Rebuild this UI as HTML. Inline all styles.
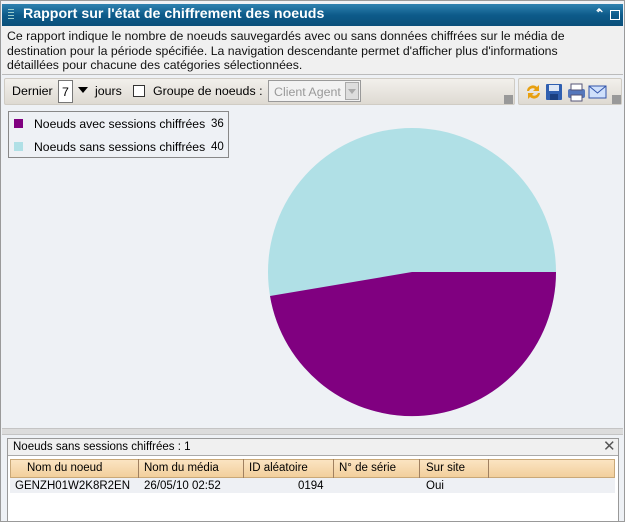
<!DOCTYPE html>
<html><head><meta charset="utf-8"><style>
*{box-sizing:border-box;margin:0;padding:0}
body{width:625px;height:522px;background:#c8c8c8;font-family:"Liberation Sans","DejaVu Sans",sans-serif;font-size:11px;color:#000;position:relative;overflow:hidden}
.abs{position:absolute;white-space:nowrap}
</style></head><body>
<div class="abs" style="left:0;top:0;width:625px;height:522px;background:#eef1f5;border:1px solid #9a9a9a"></div>
<div class="abs" style="left:2px;top:4px;width:621px;height:22px;background:linear-gradient(#2f82b0,#0d5b8a 50%,#0a4f7a);"></div>
<div class="abs" style="left:8px;top:9px;width:6px;height:12px;background:repeating-linear-gradient(#9cc 0 1px,transparent 1px 3px)"></div>
<div class="abs" style="left:23px;top:6px;color:#fff;font-weight:bold;font-size:14.2px">Rapport sur l'état de chiffrement des noeuds</div>
<div class="abs" style="left:594px;top:6px;color:#fff;font-size:12px;font-weight:bold">&#8963;</div>
<div class="abs" style="left:595px;top:11px;color:#fff;font-size:12px;font-weight:bold;line-height:6px">&#8963;</div>
<div class="abs" style="left:610px;top:10px;width:10px;height:10px;border:1.5px solid #fff"></div>
<div class="abs" style="left:2px;top:26px;width:621px;height:49px;background:#f0f0f0;border-bottom:1px solid #bbb"></div>
<div class="abs" style="left:7px;top:29px;line-height:14.5px;font-size:12.3px;color:#111">Ce rapport indique le nombre de noeuds sauvegardés avec ou sans données chiffrées sur le média de<br>destination pour la période spécifiée. La navigation descendante permet d'afficher plus d'informations<br>détaillées pour chacune des catégories sélectionnées.</div>
<div class="abs" style="left:4px;top:78px;width:511px;height:27px;background:linear-gradient(#f2f0ec,#dedad2);border:1px solid #d0ccc4;border-radius:2px"></div>
<div class="abs" style="left:518px;top:78px;width:104px;height:27px;background:linear-gradient(#f2f0ec,#dedad2);border:1px solid #d0ccc4;border-radius:2px"></div>
<div class="abs" style="left:12px;top:84px;font-size:12.4px">Dernier</div>
<div class="abs" style="left:58px;top:80px;width:15px;height:23px;background:#fff;border:1px solid #777;padding:4px 0 0 3px;font-size:12.4px">7</div>
<div class="abs" style="left:78px;top:87px;width:0;height:0;border-left:5px solid transparent;border-right:5px solid transparent;border-top:6px solid #000"></div>
<div class="abs" style="left:95px;top:84px;font-size:12.4px">jours</div>
<div class="abs" style="left:133px;top:85px;width:12px;height:12px;background:#fff;border:1px solid #333"></div>
<div class="abs" style="left:153px;top:84px;font-size:12.4px">Groupe de noeuds :</div>
<div class="abs" style="left:268px;top:80px;width:93px;height:22px;background:#f2f2f2;border:1px solid #999;padding:4px 0 0 5px;color:#999;font-size:12.4px">Client Agent</div>
<div class="abs" style="left:345px;top:82px;width:14px;height:18px;background:#ddd;border:1px solid #aaa"></div>
<div class="abs" style="left:348px;top:89px;border-left:4px solid transparent;border-right:4px solid transparent;border-top:5px solid #aaa;width:0;height:0"></div>
<div class="abs" style="left:504px;top:95px;width:9px;height:9px;background:#999"></div>
<div class="abs" style="left:612px;top:95px;width:9px;height:9px;background:#999"></div>
<svg class="abs" style="left:523px;top:82px" width="92" height="20">
<path d="M4 9a6 6 0 0 1 10-4l2-2v6h-6l2-2a4 4 0 0 0-6 2z" fill="#e8a010"/>
<path d="M17 11a6 6 0 0 1-10 4l-2 2v-6h6l-2 2a4 4 0 0 0 6-2z" fill="#e8a010"/>
<rect x="23" y="2" width="16" height="16" rx="1" fill="#2f5fb0"/><rect x="26" y="3" width="10" height="6" fill="#dfe8f5"/><rect x="27" y="12" width="8" height="6" fill="#1a3f80"/>
<rect x="45" y="7" width="17" height="9" rx="2" fill="#5577bb"/><rect x="48" y="2" width="11" height="6" fill="#fff" stroke="#557"/><rect x="48" y="13" width="11" height="6" fill="#fff" stroke="#557"/>
<rect x="66" y="4" width="17" height="12" fill="#cfe0fb" stroke="#3355aa"/><path d="M66 4l8.5 7 8.5-7" fill="none" stroke="#3355aa"/>
</svg>
<div class="abs" style="left:8px;top:111px;width:221px;height:47px;border:1px solid #888"></div>
<div class="abs" style="left:14px;top:119px;width:9px;height:9px;background:#800080"></div>
<div class="abs" style="left:34px;top:117px;font-size:12.2px">Noeuds avec sessions chiffrées</div>
<div class="abs" style="left:211px;top:118px;font-size:11.5px">36</div>
<div class="abs" style="left:14px;top:142px;width:9px;height:9px;background:#b0e0e6"></div>
<div class="abs" style="left:34px;top:140px;font-size:12.2px">Noeuds sans sessions chiffrées</div>
<div class="abs" style="left:211px;top:141px;font-size:11.5px">40</div>
<svg class="abs" style="left:0;top:0" width="625" height="522">
<circle cx="412" cy="272" r="144" fill="#b0e0e6"/>
<path d="M412 272 L556 272 A144 144 0 0 1 270 296 Z" fill="#800080"/>
</svg>
<div class="abs" style="left:2px;top:428px;width:621px;height:7px;background:#dcdcdc;border-top:1px solid #c4c4c4;border-bottom:1px solid #c4c4c4"></div>
<div class="abs" style="left:7px;top:438px;width:612px;height:84px;background:#fff;border:1px solid #999"></div>
<div class="abs" style="left:8px;top:439px;width:610px;height:17px;background:#f0f0f0;border-bottom:1px solid #aaa"></div>
<div class="abs" style="left:13px;top:441px;font-size:11.5px">Noeuds sans sessions chiffrées : 1</div>
<div class="abs" style="left:603px;top:437px;font-size:15px;font-weight:bold;color:#555">✕</div>
<div class="abs" style="left:10px;top:459px;width:605px;height:19px;background:linear-gradient(#fbe4c2,#f2cf9c);border:1px solid #c9a878"></div>
<div class="abs" style="left:138px;top:459px;width:1px;height:19px;background:#a08060"></div>
<div class="abs" style="left:243px;top:459px;width:1px;height:19px;background:#a08060"></div>
<div class="abs" style="left:333px;top:459px;width:1px;height:19px;background:#a08060"></div>
<div class="abs" style="left:419px;top:459px;width:1px;height:19px;background:#a08060"></div>
<div class="abs" style="left:488px;top:459px;width:1px;height:19px;background:#a08060"></div>
<div class="abs" style="left:27px;top:462px;font-size:11.5px">Nom du noeud</div>
<div class="abs" style="left:144px;top:462px;font-size:11.5px">Nom du média</div>
<div class="abs" style="left:249px;top:462px;font-size:11.5px">ID aléatoire</div>
<div class="abs" style="left:339px;top:462px;font-size:11.5px">N° de série</div>
<div class="abs" style="left:426px;top:462px;font-size:11.5px">Sur site</div>
<div class="abs" style="left:10px;top:478px;width:605px;height:15px;background:#eef0f4"></div>
<div class="abs" style="left:15px;top:480px;font-size:11.5px">GENZH01W2K8R2EN</div>
<div class="abs" style="left:144px;top:480px;font-size:11.5px">26/05/10 02:52</div>
<div class="abs" style="left:298px;top:480px;font-size:11.5px">0194</div>
<div class="abs" style="left:426px;top:480px;font-size:11.5px">Oui</div>
</body></html>
